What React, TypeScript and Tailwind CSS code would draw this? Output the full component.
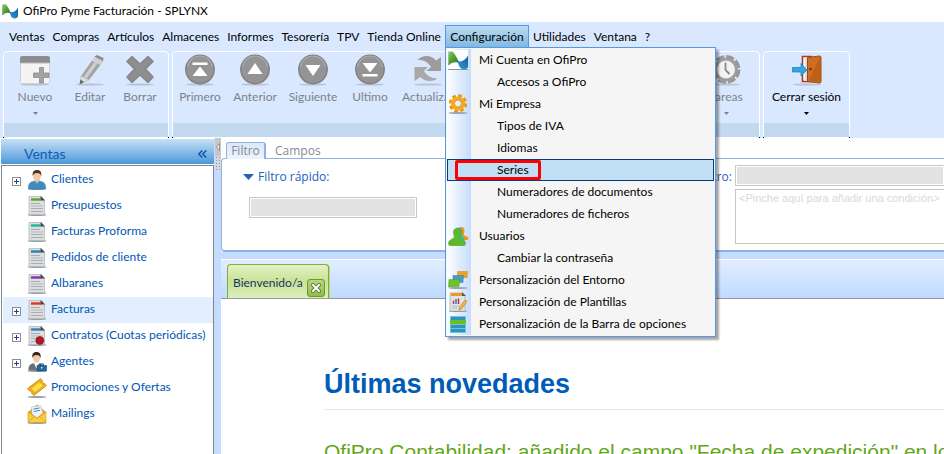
import type { ReactNode } from "react";

const ui = "font-['Lato','Noto_Sans',sans-serif]";
const panelFont = "font-['Open_Sans','Noto_Sans',sans-serif]";

/* ---------- brand ---------- */

function BrandIcon({ className }: { className: string }) {
  return (
    <svg viewBox="0 0 20 20" className={className} aria-hidden="true">
      <defs>
        <linearGradient id="brandGreen" x1="0" y1="0" x2="1" y2="1">
          <stop offset="0" stopColor="#8fcb5a" />
          <stop offset="0.5" stopColor="#4a9a30" />
          <stop offset="1" stopColor="#1f6b35" />
        </linearGradient>
        <linearGradient id="brandBlue" x1="0" y1="1" x2="1" y2="0">
          <stop offset="0" stopColor="#2f9edb" />
          <stop offset="1" stopColor="#155a9c" />
        </linearGradient>
      </defs>
      <path d="M0 1h2v14H0z" fill="#c9ced2" />
      <path d="M0.500 15.500V4C1 1.500 4 .5 6 3c1.500 2 3.500 6.500 6 10.500C8 11.500 4 12 .5 15.500z" fill="url(#brandGreen)" />
      <path d="M9.500 11.500c4.500.5 8-1.500 10.500-6V17c-1 2.500-5 3-7.500 1-1.500-1.500-2-4-3-6.500z" fill="url(#brandBlue)" />
    </svg>
  );
}

/* ---------- toolbar icons ---------- */

function ToolSvg({ children }: { children: ReactNode }) {
  return (
    <svg viewBox="0 0 32 32" className="size-8 shrink-0" aria-hidden="true">
      <ellipse cx="16" cy="30.500" rx="14" ry="1" fill="#9aa3b0" opacity="0.55" />
      {children}
    </svg>
  );
}

const NewIcon = () => (
  <ToolSvg>
    <rect x="1" y="2" width="30" height="28" rx="2" fill="#f4f4f4" />
    <path d="M1.500 9v19.500a1 1 0 0 0 1 1h27a1 1 0 0 0 1-1V9" fill="none" stroke="#d2d2d2" />
    <path d="M1 9V4a2 2 0 0 1 2-2h26a2 2 0 0 1 2 2v5z" fill="#8d8d8d" />
    <path d="M2 9h28" stroke="#b9b9b9" />
    <path d="M20.500 13.500h4v5.500h5.500v4.500h-5.500v5.500h-4v-5.500H14.500V19h6z" fill="#a3a3a3" stroke="#8b8b8b" strokeWidth="0.800" />
  </ToolSvg>
);

const EditIcon = () => (
  <ToolSvg>
    <path d="M20.500 2.500 23 1l6.500 3-.5 4-8-4z" fill="#8b8b8b" />
    <path d="m18.500 6 2-3.500 8.500 4.500-2 4z" fill="#cfcfcf" />
    <path d="m18 6.500 8.500 4.500L15 26l-8-4z" fill="#a5a5a5" />
    <path d="m20.500 8 2.800 1.500L12.500 24.500 9.700 23z" fill="#d0d0d0" />
    <path d="m7 22 8 4-9 4z" fill="#ddd" stroke="#aaa" strokeWidth="0.500" />
    <path d="m6.500 25.500 3.500 2.500-4.500 2.500z" fill="#666" />
  </ToolSvg>
);

const DeleteIcon = () => (
  <ToolSvg>
    <path d="M8 2.500 16 10l8-7.500L29 7.500 21.500 15l7.500 8-5 5.500-8-7.500-8 7.500L3 23l7.500-8L3 7.500z" fill="#8e8e8e" stroke="#868686" strokeLinejoin="round" strokeWidth="1.500" />
  </ToolSvg>
);

function RoundIcon({ children }: { children: ReactNode }) {
  return (
    <ToolSvg>
      <circle cx="16" cy="15.500" r="14.200" fill="#949494" stroke="#7f7f7f" strokeWidth="1.400" />
      <path d="M3.500 13a12.600 12.600 0 0 1 25 0" fill="none" stroke="#adadad" strokeWidth="1.200" />
      <g fill="#fff">{children}</g>
    </ToolSvg>
  );
}

const FirstIcon = () => (
  <RoundIcon>
    <rect x="8.500" y="8.500" width="15" height="2.500" />
    <path d="m16 12.500 7.500 9.500h-15z" />
  </RoundIcon>
);
const PrevIcon = () => (
  <RoundIcon>
    <path d="m16 9 7.500 11h-15z" />
  </RoundIcon>
);
const NextIcon = () => (
  <RoundIcon>
    <path d="M8.500 11h15L16 22z" />
  </RoundIcon>
);
const LastIcon = () => (
  <RoundIcon>
    <path d="M8.500 9h15L16 18.500z" />
    <rect x="8.500" y="20" width="15" height="2.500" />
  </RoundIcon>
);

const RefreshIcon = () => (
  <ToolSvg>
    <path d="M5.500 6C11 0 20 1.500 24 6.500L29 3v14H14.500l4.500-4C16 8 11.500 5.500 5.500 6z" fill="#9c9c9c" />
    <path d="M25.500 24.500C20 28.500 12 27.500 8.500 23L2.500 27V13H16l-4 4c2.500 4.500 7 7.500 13.500 7.500z" fill="#a8a8a8" />
  </ToolSvg>
);

const TasksIcon = () => (
  <ToolSvg>
    <circle cx="16" cy="15.500" r="12.500" fill="#fff" stroke="#979797" strokeWidth="4" strokeDasharray="7.800 2" />
    <circle cx="16" cy="15.500" r="10.500" fill="#f2f2f2" stroke="#9d9d9d" strokeWidth="3" />
    <path d="M15.500 8.500v7.500l4 4" fill="none" stroke="#888" strokeWidth="1.800" />
  </ToolSvg>
);

const ExitIcon = () => (
  <ToolSvg>
    <path d="M11.500 2.500H20V27.500h-8.500z" fill="#fff" stroke="#a63a1c" strokeWidth="1.600" />
    <path d="M14 4 16 3v24l-2-1z" fill="#d9dde2" />
    <path d="M16.500 3.500 28.500 2c1 0 1.500.5 1.500 1.500v24c0 1-.5 1.500-1.500 1.500L16.500 27.500z" fill="#cd6f22" stroke="#9c4a12" />
    <path d="M29 3v25L18 26.500z" fill="#b4560f" opacity="0.6" />
    <circle cx="19.500" cy="15" r="1.300" fill="#8b1f0e" />
    <path d="M1.500 13.500h8.500v-4l6 6.500-6 6v-4H1.500z" fill="#37a5dc" stroke="#1c86c0" strokeWidth="0.800" />
  </ToolSvg>
);

/* ---------- toolbar ---------- */

function ToolButton({ icon, label, arrow = false, width, active = false }: { icon: ReactNode; label: string; arrow?: boolean; width: string; active?: boolean }) {
  return (
    <button type="button" className={`flex shrink-0 flex-col items-center pt-[2px] ${width} ${active ? "text-black" : "text-[#7d8289]"}`}>
      {icon}
      <span className="mt-[3px] text-[12px] leading-4 whitespace-nowrap">{label}</span>
      {arrow && (
        <svg viewBox="0 0 5 3" className="mt-[7px] h-[3px] w-[5px]" aria-hidden="true">
          <path d="M0 0h5L2.500 3z" fill="currentColor" />
        </svg>
      )}
    </button>
  );
}

function ToolGroup({ children, className = "" }: { children: ReactNode; className?: string }) {
  return (
    <div className={`relative flex h-[87px] flex-col rounded-[4px] border border-white bg-[#d9e8ff] ${className}`}>
      <div className="flex flex-1">{children}</div>
      <div className="h-[14px] shrink-0 bg-[#c2d9f0]" />
      <span className="absolute -bottom-px -left-px size-px bg-black" />
      <span className="absolute -right-px -bottom-px size-px bg-black" />
    </div>
  );
}

/* ---------- configuration menu icons ---------- */

function MenuSvg({ children }: { children: ReactNode }) {
  return (
    <svg viewBox="0 0 20 20" className="size-5" aria-hidden="true">
      {children}
    </svg>
  );
}

const GearIcon = () => (
  <MenuSvg>
    <ellipse cx="10" cy="19" rx="9.500" ry="1" fill="#9aa3b0" />
    <circle cx="10" cy="9.500" r="7.700" fill="none" stroke="#e89610" strokeWidth="3" strokeDasharray="3.600 2.440" />
    <circle cx="10" cy="9.500" r="5.300" fill="none" stroke="#f5ab1c" strokeWidth="3.600" />
    <circle cx="10" cy="9.500" r="3.500" fill="none" stroke="#c97a08" strokeWidth="0.600" />
  </MenuSvg>
);

const UsersIcon = () => (
  <MenuSvg>
    <path d="M11 2c2-2 6-1 5.500 3-.2 2-1 3.500 0 4.500l3.500 1.500v3h-8z" fill="#f0951c" />
    <path d="M8 4c1-3.500 6-3 6 .5 0 3-1 4 0 5l2 1v3H8z" fill="#35c4d8" />
    <path d="M5.500 6c0-5 8-5 8 0 0 2-.8 3.500-1 5 0 2 5 2 5 7l-1 1.500h-15L.500 18c0-5 6-5 6-7-.2-1.500-1-3-1-5z" fill="#5cb82c" stroke="#489a22" strokeWidth="0.600" />
  </MenuSvg>
);

const WindowsIcon = () => (
  <MenuSvg>
    <ellipse cx="10" cy="18" rx="9.500" ry="1" fill="#9aa3b0" />
    <path d="M9.500 1.500h10l-.5 6h-9.500z" fill="#f2a01e" stroke="#cf8410" strokeWidth="0.500" />
    <path d="M5 5.500h10.500l-.5 7H5z" fill="#489cc8" stroke="#2f7fa9" strokeWidth="0.500" />
    <path d="M1 9.500h10.500L11 16.500.5 17z" fill="#6cc42c" stroke="#4c9c1c" strokeWidth="0.500" />
  </MenuSvg>
);

const TemplateIcon = () => (
  <MenuSvg>
    <ellipse cx="10" cy="19.200" rx="9.500" ry=".8" fill="#8a929e" />
    <path d="M2 1h12l3 3v15H2z" fill="#e2e3e6" stroke="#a5a9b0" strokeWidth="0.700" />
    <path d="M3 1h11l2 3H3z" fill="#ed9a1d" />
    <path d="M14 0v4h4z" fill="#555" />
    <path d="M4 14h7M4 16h5" stroke="#b4b7bd" />
    <path d="M5.500 12V8.500" stroke="#d83a2b" strokeWidth="1.500" />
    <path d="M8 12V7" stroke="#3477c4" strokeWidth="1.500" />
    <path d="M10.500 12V6.500" stroke="#b12f59" strokeWidth="1.500" />
    <path d="m17 8 2 1.500-5.500 7.500-2.500 1 .5-2.800z" fill="#f4b73d" stroke="#b5741a" strokeWidth="0.600" />
  </MenuSvg>
);

const BarsIcon = () => (
  <MenuSvg>
    <rect x="2" y="2" width="16" height="17" fill="#57cfe8" />
    <rect x="3" y="3" width="14" height="3" fill="#3a8fb5" />
    <rect x="2" y="6" width="16" height="4" fill="#6abf24" />
    <rect x="3" y="11" width="14" height="3" fill="#3a8fb5" />
    <rect x="3" y="15" width="14" height="3" fill="#3a8fb5" />
  </MenuSvg>
);

const AccountIcon = () => (
  <span className="flex size-5 items-center justify-center border-b border-[#8f949b] bg-white">
    <BrandIcon className="size-5" />
  </span>
);

/* ---------- menus ---------- */

type Entry = { label: string; icon?: ReactNode; sub?: boolean; selected?: boolean };

const configEntries: Entry[] = [
  { label: "Mi Cuenta en OfiPro", icon: <AccountIcon /> },
  { label: "Accesos a OfiPro", sub: true },
  { label: "Mi Empresa", icon: <GearIcon /> },
  { label: "Tipos de IVA", sub: true },
  { label: "Idiomas", sub: true },
  { label: "Series", sub: true, selected: true },
  { label: "Numeradores de documentos", sub: true },
  { label: "Numeradores de ficheros", sub: true },
  { label: "Usuarios", icon: <UsersIcon /> },
  { label: "Cambiar la contraseña", sub: true },
  { label: "Personalización del Entorno", icon: <WindowsIcon /> },
  { label: "Personalización de Plantillas", icon: <TemplateIcon /> },
  { label: "Personalización de la Barra de opciones", icon: <BarsIcon /> },
];

function ConfigMenu() {
  return (
    <div role="menu" className="absolute top-full -left-px z-20 w-[271px] border border-[#5598e6] bg-[#f5f5f5] p-px shadow-[3px_3px_2px_rgba(0,0,0,0.35)]">
      <div className="bg-linear-to-r from-white from-0% to-[#c5dcfb] to-100% bg-[length:24px_100%] bg-no-repeat">
        {configEntries.map((e) => (
          <button
            key={e.label}
            type="button"
            role="menuitem"
            className={`relative flex h-[22px] w-full items-center text-left text-[12px] whitespace-nowrap text-black ${e.selected ? "border border-[#0c3a74] bg-[#c2e0f4]" : "border border-transparent"}`}
          >
            <span className="flex w-[31px] shrink-0 items-center">{e.icon}</span>
            <span className={e.sub ? "pl-[18px]" : ""}>{e.label}</span>
            {e.selected && <span className="absolute top-0 left-[7px] h-[20px] w-[86px] rounded-[2px] border-3 border-[#fb0007]" />}
          </button>
        ))}
      </div>
    </div>
  );
}

function MenuBar() {
  const before = ["Ventas", "Compras", "Artículos", "Almacenes", "Informes", "Tesorería", "TPV", "Tienda Online"];
  const after = ["Utilidades", "Ventana", "?"];
  return (
    <nav className="flex h-[29px] items-start bg-[#d9e8ff] pt-[3px] text-[12px] whitespace-nowrap text-black">
      <div className="flex w-[445px] shrink-0 justify-between pr-1 pl-[9px]">
        {before.map((m) => (
          <button key={m} type="button" className="h-[23px]">
            {m}
          </button>
        ))}
      </div>
      <div className="relative border border-[#5598e6] bg-linear-to-b from-[#bcdcf0] to-[#80b8e0]">
        <button type="button" className="h-[21px] w-[82px]">
          Configuración
        </button>
        <ConfigMenu />
      </div>
      {after.map((m) => (
        <button key={m} type="button" className="h-[23px] px-1">
          {m}
        </button>
      ))}
    </nav>
  );
}

/* ---------- sidebar ---------- */

function SideSvg({ children }: { children: ReactNode }) {
  return (
    <svg viewBox="0 0 20 20" className="size-5 shrink-0" aria-hidden="true">
      <ellipse cx="10" cy="19" rx="9.500" ry="1" fill="#9a9ea5" />
      {children}
    </svg>
  );
}

function DocIcon({ color, seal = false }: { color: string; seal?: boolean }) {
  return (
    <SideSvg>
      <path d="M2 .5h12.500L17.500 4v14.500H2z" fill="#dcdee0" stroke="#b5b8bc" strokeWidth="0.800" />
      <path d="M13.500 0v4.500H18z" fill="#444" />
      <path d="M4 3.500h10" stroke={color} strokeWidth="2.400" />
      <path d="M4 7.500h9M4 12.500h12M4 15.500h12" stroke="#a9acb2" strokeWidth="1.200" />
      <path d="M4 10h12" stroke="#b9bcc2" strokeWidth="1.200" />
      {seal && <circle cx="12.800" cy="14.500" r="4" fill="#b01828" stroke="#8c1020" strokeWidth="0.600" />}
    </SideSvg>
  );
}

const ClientIcon = () => (
  <SideSvg>
    <path d="M1.500 18.500C1 13 4 12 7.500 11h5c3.500 1 6.500 2 6 7.500-4 1.200-13 1.200-17 0z" fill="#3f8cc0" stroke="#2d739f" strokeWidth="0.500" />
    <path d="m7.500 11 2.500 2.500 2.500-2.500V9h-5z" fill="#e7b592" />
    <ellipse cx="10" cy="6" rx="3.900" ry="5" fill="#f2c8a6" />
    <path d="M5.800 6C5 1.500 7.500 0 10 0s5 1.500 4.200 6c-.7-2-1.700-3-4.200-3S6.500 4 5.800 6z" fill="#54321c" />
  </SideSvg>
);

const AgentIcon = () => (
  <SideSvg>
    <path d="M1.500 18.500C1 13 4 12 7 11h4.500c3 1 5.500 2 5 7.500z" fill="#6a6f76" />
    <path d="m7 11 2.500 6 2.500-6z" fill="#fff" />
    <ellipse cx="9.500" cy="6" rx="3.600" ry="4.700" fill="#f2c8a6" />
    <path d="M5.500 6C4.500 1.500 7 0 9.500 0s5 1.500 4 6c-.7-2-1.500-3-4-3s-3.300 1-4 3z" fill="#332620" />
    <path d="M10 13.500h9.500v5.500H10z" fill="#1d68a3" stroke="#124c7b" strokeWidth="0.600" />
    <path d="M13 13.500V12h3.500v1.500" fill="none" stroke="#124c7b" />
    <rect x="14" y="15" width="1.500" height="1.500" fill="#d7e7f3" />
  </SideSvg>
);

const TicketIcon = () => (
  <SideSvg>
    <path d="M13.500 .5 15.500 3c-.6 1.500.5 2.600 2 2.300L19.500 7.500 7 17.500l-2.500-2.200c.5-1.500-.5-2.500-2-2.200L.5 10.600z" fill="#f3ab17" stroke="#c98310" strokeWidth="0.700" />
    <path d="m12.500 4.500 3.300 3.200L8 14l-3.300-3.500z" fill="#fbe34a" />
  </SideSvg>
);

const MailIcon = () => (
  <SideSvg>
    <path d="m1 8 9-7.500L19 8v10.500H1z" fill="#e9a31a" />
    <path d="m4.500 3 9-1.500L16 9l-6 5-5-4z" fill="#eef3f8" stroke="#9fb2c4" strokeWidth="0.500" />
    <path d="m6.500 5.200 6-1.300M7 7.500l6-1.200" stroke="#4a84b8" />
    <path d="m1 8 9 6.500L19 8v10.500H1z" fill="#f9cf3c" stroke="#d29a1c" strokeWidth="0.600" />
    <path d="m1 18.500 6.500-6M19 18.500l-6.500-6" stroke="#d9a322" strokeWidth="0.800" />
  </SideSvg>
);

type SideItem = { label: string; icon: ReactNode; expandable?: boolean; selected?: boolean };

const sideItems: SideItem[] = [
  { label: "Clientes", icon: <ClientIcon />, expandable: true },
  { label: "Presupuestos", icon: <DocIcon color="#5fa32a" /> },
  { label: "Facturas Proforma", icon: <DocIcon color="#22b79b" /> },
  { label: "Pedidos de cliente", icon: <DocIcon color="#2382ae" /> },
  { label: "Albaranes", icon: <DocIcon color="#7c35b8" /> },
  { label: "Facturas", icon: <DocIcon color="#de3a1e" />, expandable: true, selected: true },
  { label: "Contratos (Cuotas periódicas)", icon: <DocIcon color="#2b86b4" seal />, expandable: true },
  { label: "Agentes", icon: <AgentIcon />, expandable: true },
  { label: "Promociones y Ofertas", icon: <TicketIcon /> },
  { label: "Mailings", icon: <MailIcon /> },
];

function Expander({ label }: { label: string }) {
  return (
    <button type="button" aria-label={`Desplegar ${label}`} className="mt-[3px] block size-[9px]">
      <svg viewBox="0 0 9 9" className="size-[9px]" aria-hidden="true">
        <rect x="0.500" y="0.500" width="8" height="8" fill="#fff" stroke="#8a8f96" />
        <path d="M2 4.500h5M4.500 2v5" stroke="#24408c" />
      </svg>
    </button>
  );
}

function Sidebar() {
  return (
    <aside className="flex w-[214px] shrink-0 flex-col pl-px">
      <div className="flex h-[27px] shrink-0 items-center justify-between border-t border-b border-t-white border-b-white bg-linear-to-b from-[#c6e0f8] to-[#4a98d8] pt-1 pr-[7px] pl-[23px] text-[#0f5dba]">
        <h2 className="text-[14px] leading-5">Ventas</h2>
        <button type="button" aria-label="Contraer panel">
          <svg viewBox="0 0 9 8" className="h-2 w-[9px]" fill="none" stroke="#0b55ae" strokeWidth="1.500" aria-hidden="true">
            <path d="M4.300.5.800 4l3.500 3.500M8.300.5 4.800 4l3.500 3.500" />
          </svg>
        </button>
      </div>
      <ul className="flex-1 border-x border-t border-[#80868e] bg-white pt-px">
        {sideItems.map((s) => (
          <li key={s.label} className={`ml-px flex h-[26px] items-center ${s.selected ? "bg-[#e3eefe]" : ""}`}>
            <span className="w-6 shrink-0 pl-[9px]">{s.expandable && <Expander label={s.label} />}</span>
            {s.icon}
            <a href="#" className="pb-[2px] pl-1 text-[12px] leading-4 whitespace-nowrap text-[#0057b5]">
              {s.label}
            </a>
          </li>
        ))}
      </ul>
    </aside>
  );
}

function Splitter() {
  return (
    <div className="w-[7px] shrink-0 bg-[#c5dcff]">
      <div className="ml-px flex h-[18px] items-center justify-center bg-[#c6c6c6]">
        <svg viewBox="0 0 4 8" className="h-2 w-1" aria-hidden="true">
          <path d="M3.500.5v7L.500 4z" fill="#eee" stroke="#777" strokeWidth="0.700" />
        </svg>
      </div>
      <div className="ml-px h-[14px] bg-[#d5d9df] bg-[radial-gradient(#8f949c_1px,transparent_1px)] bg-[length:3px_3px]" />
    </div>
  );
}

/* ---------- main area ---------- */

const field = "border border-[#c6c6c6] bg-[#e2e2e2] shadow-[inset_0_0_0_1px_#fff] h-[21px]";

function FilterPanel() {
  return (
    <section className={`bg-white pt-[4px] text-[12px] ${panelFont}`}>
      <div className="relative z-10 flex h-4 pl-[5px] text-[#868b92]">
        <button type="button" className="-mb-px h-[17px] w-10 rounded-t-[3px] border border-r-2 border-b-0 border-[#8fb2e5] bg-linear-to-b from-[#dce8fb] to-[#edf3fc] leading-4">
          Filtro
        </button>
        <button type="button" className="px-[9px] pt-px leading-4">
          Campos
        </button>
      </div>
      <div className="flex h-[94px] rounded-l-[4px] border border-r-0 border-b-2 border-[#8fb2e5] bg-white">
        <div className="w-[486px] shrink-0 pt-[10px] pl-[21px]">
          <label htmlFor="quick" className="flex items-center gap-1 leading-4 text-[#1763bb]">
            <svg viewBox="0 0 11 6" className="h-[6px] w-[11px]" aria-hidden="true">
              <path d="M0 0h11L5.500 6z" fill="#2764ae" />
            </svg>
            Filtro rápido:
          </label>
          <input id="quick" className={`mt-[12px] ml-[6px] w-[168px] ${field}`} />
        </div>
        <label htmlFor="filter" className="w-[27px] shrink-0 pt-[10px] pr-[3px] text-right leading-4 text-[#1763bb]">
          <span className="float-right">Filtro:</span>
        </label>
        <div className="flex flex-1 flex-col gap-[3px] pt-[6px]">
          <input id="filter" className={`w-full border-r-0 ${field}`} />
          <textarea
            aria-label="Condiciones"
            placeholder="<Pinche aquí para añadir una condición>"
            className="h-[55px] w-full resize-none overflow-hidden border border-r-0 border-[#c6c6c6] bg-white px-[3px] font-['Liberation_Sans',sans-serif] text-[11px] leading-4 whitespace-nowrap placeholder:text-[#d9d9d9]"
          />
        </div>
      </div>
    </section>
  );
}

function TabStrip() {
  return (
    <div className="mt-[7px] flex h-[40px] shrink-0 items-end border-t border-b border-t-white border-b-[#989898] bg-linear-to-b from-[#e2eeff] to-[#bfdaff] pl-[6px]">
      <div className="flex h-[34px] w-[102px] items-end rounded-t-[4px] border border-b-0 border-[#82ad36] bg-linear-to-b from-[#e3f0c6] via-[#c9e294] to-[#dcedbd] shadow-[1px_0_0_#b9d48c]">
        <button type="button" className="flex-1 pb-[7px] pl-[5px] text-left text-[12px] leading-4 whitespace-nowrap text-[#163568]">
          Bienvenido/a
        </button>
        <button type="button" aria-label="Cerrar pestaña" className="mr-[3px] mb-px flex size-[18px] shrink-0 items-center justify-center rounded-[3px] border border-[#6b9a28] bg-linear-to-b from-[#b5d778] to-[#91bd45]">
          <svg viewBox="0 0 10 10" className="size-[10px]" aria-hidden="true">
            <path d="m2 2 6 6M8 2 2 8" stroke="#55652f" strokeWidth="3.600" strokeLinecap="square" />
            <path d="m2 2 6 6M8 2 2 8" stroke="#fff" strokeWidth="2" strokeLinecap="square" />
          </svg>
        </button>
      </div>
    </div>
  );
}

export default function App() {
  return (
    <div className={`flex h-screen flex-col overflow-hidden bg-white ${ui}`}>
      <header className="flex h-[22px] shrink-0 items-center gap-[5px] pl-[2px] text-[12px] text-black">
        <BrandIcon className="size-[16px]" />
        <h1>OfiPro Pyme Facturación - SPLYNX</h1>
      </header>

      <MenuBar />

      <div className="flex shrink-0 gap-[3px] bg-[#d9e8ff] pl-[3px]">
        <ToolGroup className="w-[166px]">
          <ToolButton icon={<NewIcon />} label="Nuevo" arrow width="w-[62px]" />
          <ToolButton icon={<EditIcon />} label="Editar" width="w-[48px]" />
          <ToolButton icon={<DeleteIcon />} label="Borrar" width="w-[52px]" />
        </ToolGroup>
        <ToolGroup className="w-[588px]">
          <ToolButton icon={<FirstIcon />} label="Primero" width="w-[54px]" />
          <ToolButton icon={<PrevIcon />} label="Anterior" width="w-[56px]" />
          <ToolButton icon={<NextIcon />} label="Siguiente" width="w-[60px]" />
          <ToolButton icon={<LastIcon />} label="Ultimo" width="w-[54px]" />
          <ToolButton icon={<RefreshIcon />} label="Actualizar" width="w-[62px]" />
          <div className="flex-1" />
          <ToolButton icon={<TasksIcon />} label="Tareas" arrow width="w-[66px]" />
        </ToolGroup>
        <ToolGroup className="w-[87px]">
          <ToolButton icon={<ExitIcon />} label="Cerrar sesión" arrow active width="w-[85px]" />
        </ToolGroup>
      </div>

      <div className="flex min-h-0 flex-1">
        <Sidebar />
        <Splitter />
        <main className="flex min-w-0 flex-1 flex-col bg-[#c5dcff]">
          <FilterPanel />
          <TabStrip />
          <article className="flex-1 overflow-hidden bg-white pt-[69px] pl-[103px] font-['Liberation_Sans',Arial,sans-serif]">
            <h2 className="border-b border-[#e9e9e9] pb-[9px] text-[27px] leading-8 font-bold text-[#005cb9]">Últimas novedades</h2>
            <h3 className="mt-[30px] text-[21px] leading-6 whitespace-nowrap text-[#63a61a]">
              OfiPro Contabilidad: añadido el campo "Fecha de expedición" en lo
            </h3>
          </article>
        </main>
      </div>
    </div>
  );
}
